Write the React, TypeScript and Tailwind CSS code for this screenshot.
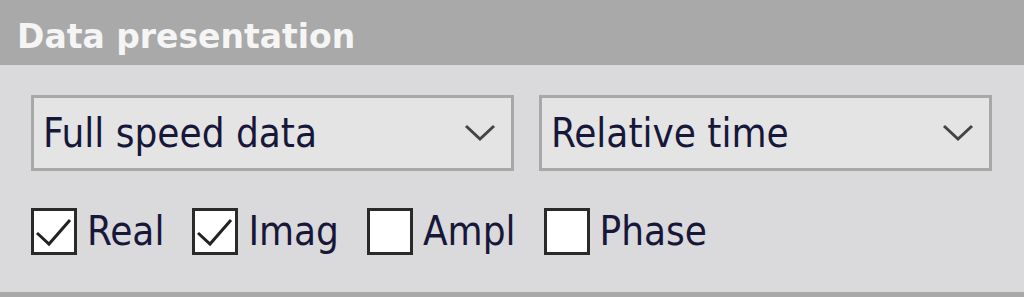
import React from 'react';

const CheckItem = ({ label, checked }: { label: string; checked: boolean }) => (
    <label className="flex items-center gap-[10px]">
        <span className="flex h-[47px] w-[46px] items-center justify-center border-[3px] border-[#2a2a2a] bg-white">
            {checked && (
                <svg width="40" height="40" viewBox="0 0 40 40" fill="none">
                    <path d="M3 21 L15 32 L36 8" stroke="#222" strokeWidth="3" />
                </svg>
            )}
        </span>
        <span>{label}</span>
    </label>
);

const Dropdown = ({ value, width }: { value: string; width: string }) => (
    <div className={`flex h-[76px] ${width} items-center justify-between border-[3px] border-[#a8a8a8] bg-[#e4e4e4] pl-[9px] pr-[15px]`}>
        <span>{value}</span>
        <svg width="32" height="18" viewBox="0 0 32 18" fill="none">
            <path d="M2 2 L16 15 L30 2" stroke="#444" strokeWidth="3" />
        </svg>
    </div>
);

export default function App() {
    return (
        <div className="h-[297px] w-[1024px] overflow-hidden bg-[#dad9db] font-['DejaVu_Sans_Condensed','DejaVu_Sans',sans-serif] text-[40px] text-[#17173a]">
            <div className="flex h-[65px] items-center bg-[#a9a9a9] pl-[17px] pt-[8px] font-['DejaVu_Sans',sans-serif] text-[33px] font-bold text-[#f5f5f5]">
                Data presentation
            </div>
            <div className="flex h-[232px] flex-col gap-[37px] border-b-[5px] border-[#a9a9a9] px-[31px] pt-[30px]">
                <div className="flex gap-[25px]">
                    <Dropdown value="Full speed data" width="w-[483px]" />
                    <Dropdown value="Relative time" width="w-[453px]" />
                </div>
                <div className="flex h-[47px] items-center gap-[28px] leading-[47px]">
                    <CheckItem label="Real" checked />
                    <CheckItem label="Imag" checked />
                    <CheckItem label="Ampl" checked={false} />
                    <CheckItem label="Phase" checked={false} />
                </div>
            </div>
        </div>
    );
}
